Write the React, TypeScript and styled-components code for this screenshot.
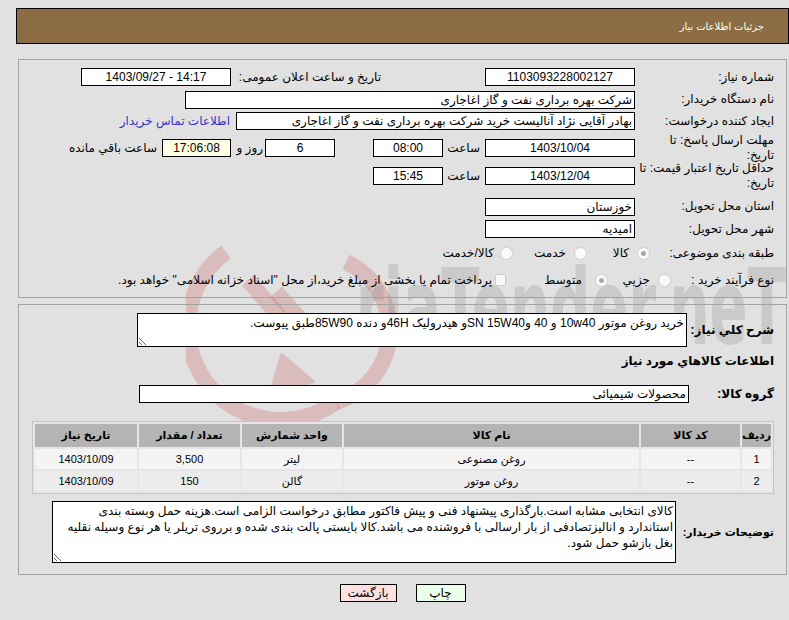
import React from 'react';
import styled, { createGlobalStyle } from 'styled-components';

const Global = createGlobalStyle`
  html, body { margin: 0; padding: 0; background: #e1e1e1; }
  body {
    font-family: "Liberation Sans", "DejaVu Sans", sans-serif;
    font-size: 12px;
    color: #000;
  }
  * { box-sizing: border-box; }
`;

const Page = styled.div`
  position: relative;
  direction: rtl;
  width: 773px;
  margin-left: 16px;
  padding-top: 8px;
`;

const Watermark = styled.svg`
  position: absolute;
  left: 170px;
  top: 232px;
  width: 603px;
  height: 200px;
  z-index: 0;
  pointer-events: none;
`;

const Header = styled.div`
  position: relative;
  z-index: 1;
  height: 36px;
  background: #8c6d43;
  border: 1px solid #000;
  color: #fff;
  display: flex;
  align-items: center;
  padding-right: 24px;
  font-size: 10px;
`;

const Panel = styled.div<{ $mt: number; $pt: number; $pb: number }>`
  position: relative;
  z-index: 1;
  margin: ${(p) => p.$mt}px 2px 0;
  border: 1px solid #a3a3a3;
  padding: ${(p) => p.$pt}px 12px ${(p) => p.$pb}px 0;
`;

const Row = styled.div<{ $h: number; $mt?: number }>`
  display: flex;
  align-items: center;
  height: ${(p) => p.$h}px;
  margin-top: ${(p) => p.$mt ?? 0}px;
`;

const Label = styled.div<{ $w?: number; $bold?: boolean; $fs?: number }>`
  width: ${(p) => p.$w ?? 139}px;
  flex: none;
  text-align: right;
  line-height: 15px;
  font-size: ${(p) => p.$fs ?? 12}px;
  font-weight: ${(p) => (p.$bold ? 'bold' : 'normal')};
  white-space: nowrap;
`;

const Field = styled.div<{ $w: number; $align?: string; $bg?: string; $ltr?: boolean }>`
  width: ${(p) => p.$w}px;
  height: 18px;
  flex: none;
  border: 1px solid #000;
  background: ${(p) => p.$bg ?? '#fff'};
  text-align: ${(p) => p.$align ?? 'center'};
  direction: ${(p) => (p.$ltr ? 'ltr' : 'rtl')};
  padding: 0 2px;
  line-height: 16px;
  white-space: nowrap;
  overflow: hidden;
  font-size: 12px;
`;

const Cell = styled.div<{ $w: number; $pr?: number }>`
  width: ${(p) => p.$w}px;
  flex: none;
  padding-right: ${(p) => p.$pr ?? 0}px;
  white-space: nowrap;
`;

const Link = styled.a`
  margin-right: 6px;
  color: #3434c8;
  text-decoration: none;
  white-space: nowrap;
`;

const Option = styled.div<{ $w?: number; $gap: number }>`
  display: flex;
  align-items: center;
  gap: ${(p) => p.$gap}px;
  width: ${(p) => (p.$w ? `${p.$w}px` : 'auto')};
  flex: none;
  white-space: nowrap;
`;

const Radio = styled.span<{ $on?: boolean }>`
  width: 13px;
  height: 13px;
  flex: none;
  border-radius: 50%;
  border: 1px solid #cdcdcd;
  background: #fafafa;
  display: flex;
  align-items: center;
  justify-content: center;
  &::after {
    content: '';
    width: 5px;
    height: 5px;
    border-radius: 50%;
    background: ${(p) => (p.$on ? '#a8a8a8' : 'transparent')};
  }
`;

const Check = styled.span`
  width: 11px;
  height: 12px;
  flex: none;
  border: 1px solid #cdcdcd;
  background: #f7f7f7;
  border-radius: 2px;
`;

const Area = styled.textarea<{ $w: number; $h: number }>`
  width: ${(p) => p.$w}px;
  height: ${(p) => p.$h}px;
  flex: none;
  border: 1px solid #000;
  background: #fff;
  font-family: "Liberation Sans", "DejaVu Sans", sans-serif;
  font-size: 12px;
  line-height: 16px;
  padding: 1px 2px;
  margin: 0;
  overflow: hidden;
  direction: rtl;
  color: #000;
`;

const Grid = styled.div`
  margin: 18px 0 0 13px;
  display: grid;
  grid-template-columns: 29px 99px 295px 100px 101px 102px;
  grid-template-rows: 23px;
  grid-auto-rows: 20px;
  gap: 2px;
  padding: 2px;
  border: 1px solid #c4c4c4;
  background: #e6e6e6;
`;

const Th = styled.div`
  background: #b4b4b4;
  font-weight: bold;
  display: flex;
  align-items: center;
  justify-content: center;
  font-size: 11px;
`;

const Td = styled.div<{ $alt?: boolean }>`
  background: ${(p) => (p.$alt ? '#ececec' : '#f4f4f4')};
  display: flex;
  align-items: center;
  justify-content: center;
  font-size: 11px;
`;

const Buttons = styled.div`
  position: relative;
  z-index: 1;
  display: flex;
  justify-content: center;
  gap: 19px;
  margin-top: 9px;
`;

const Button = styled.button<{ $bg: string; $w: number }>`
  width: ${(p) => p.$w}px;
  height: 18px;
  border: 1px solid #000;
  background: ${(p) => p.$bg};
  font-family: "Liberation Sans", "DejaVu Sans", sans-serif;
  font-size: 12px;
  padding: 0;
  color: #000;
`;

const items = [
  { n: '1', code: '--', name: 'روغن مصنوعی', unit: 'لیتر', qty: '3,500', date: '1403/10/09' },
  { n: '2', code: '--', name: 'روغن موتور', unit: 'گالن', qty: '150', date: '1403/10/09' },
];

export default function App() {
  return (
    <>
      <Global />
      <Page>
        <Watermark viewBox="0 0 603 200">
          <g fill="none" stroke="rgba(200,60,60,0.22)" strokeWidth="16" strokeLinecap="butt">
            <path d="M40 20 A75 75 0 0 0 150 170" />
            <path d="M150 170 A75 75 0 0 0 160 30" />
            <path d="M62 48 L98 90" />
            <path d="M90 60 L130 105" />
          </g>
          <path d="M95 120 L80 170 L130 150 Z" fill="rgba(200,60,60,0.22)" />
          <text
            x="170"
            y="112"
            fontFamily="DejaVu Sans"
            fontWeight="bold"
            fontSize="105"
            fill="rgba(90,90,90,0.17)"
            textLength="430"
            lengthAdjust="spacingAndGlyphs"
            direction="ltr"
          >
            riaTender.neT
          </text>
        </Watermark>

        <Header>جزئیات اطلاعات نیاز</Header>

        <Panel $mt={15} $pt={6} $pb={3}>
          <Row $h={22}>
            <Label>شماره نیاز:</Label>
            <Field $w={150}>1103093228002127</Field>
            <Cell $w={104} />
            <Label $w={144}>تاریخ و ساعت اعلان عمومی:</Label>
            <Cell $w={6} />
            <Field $w={150} $ltr>1403/09/27 - 14:17</Field>
          </Row>
          <Row $h={23}>
            <Label>نام دستگاه خریدار:</Label>
            <Field $w={450} $align="right">شرکت بهره برداری نفت و گاز اغاجاری</Field>
          </Row>
          <Row $h={20}>
            <Label>ایجاد کننده درخواست:</Label>
            <Field $w={399} $align="right">بهادر  آقایی نژاد آنالیست خرید شرکت بهره برداری نفت و گاز اغاجاری</Field>
            <Link href="#">اطلاعات تماس خریدار</Link>
          </Row>
          <Row $h={34}>
            <Label>مهلت ارسال پاسخ: تا<br />تاریخ:</Label>
            <Field $w={150}>1403/10/04</Field>
            <Cell $w={42} $pr={5}>ساعت</Cell>
            <Field $w={70}>08:00</Field>
            <Cell $w={38} />
            <Field $w={70}>6</Field>
            <Cell $w={34} $pr={2}>روز و</Cell>
            <Field $w={69} $bg="#ffffe6">17:06:08</Field>
            <Cell $w={95} $pr={5}>ساعت باقي مانده</Cell>
          </Row>
          <Row $h={22}>
            <Label>حداقل تاریخ اعتبار قیمت: تا<br />تاریخ:</Label>
            <Field $w={150}>1403/12/04</Field>
            <Cell $w={42} $pr={5}>ساعت</Cell>
            <Field $w={70}>15:45</Field>
          </Row>
          <Row $h={23} $mt={8}>
            <Label>استان محل تحویل:</Label>
            <Field $w={150} $align="right">خوزستان</Field>
          </Row>
          <Row $h={22}>
            <Label>شهر محل تحویل:</Label>
            <Field $w={150} $align="right">امیدیه</Field>
          </Row>
          <Row $h={26}>
            <Label $w={124}>طبقه بندی موضوعی:</Label>
            <Option $w={63} $gap={8}><Radio $on />کالا</Option>
            <Option $w={74} $gap={8}><Radio />خدمت</Option>
            <Option $gap={6}><Radio />کالا/خدمت</Option>
          </Row>
          <Row $h={28}>
            <Label $w={103}>نوع فرآیند خرید :</Label>
            <Option $w={63} $gap={8}><Radio />جزيي</Option>
            <Option $w={102} $gap={13}><Radio $on />متوسط</Option>
            <Option $gap={3}><Check />پرداخت تمام یا بخشی از مبلغ خرید،از محل "اسناد خزانه اسلامی" خواهد بود.</Option>
          </Row>
        </Panel>

        <Panel $mt={6} $pt={8} $pb={11}>
          <Row $h={34}>
            <Label $w={87} $bold>شرح کلي نياز:</Label>
            <Area $w={550} $h={34} readOnly value="خرید روغن موتور 10w40 و 40 وSN 15W40و هیدرولیک 46Hو دنده 85W90طبق پیوست." />
          </Row>
          <Row $h={20} $mt={4}>
            <Label $w={300} $bold>اطلاعات کالاهاي مورد نياز</Label>
          </Row>
          <Row $h={18} $mt={14}>
            <Label $w={85} $bold>گروه کالا:</Label>
            <Field $w={550} $align="right">محصولات شیمیائی</Field>
          </Row>
          <Grid>
            <Th>رديف</Th>
            <Th>کد کالا</Th>
            <Th>نام کالا</Th>
            <Th>واحد شمارش</Th>
            <Th>تعداد / مقدار</Th>
            <Th>تاريخ نياز</Th>
            {items.map((it, i) => (
              <React.Fragment key={it.n}>
                <Td $alt={i === 1}>{it.n}</Td>
                <Td $alt={i === 1}>{it.code}</Td>
                <Td $alt={i === 1}>{it.name}</Td>
                <Td $alt={i === 1}>{it.unit}</Td>
                <Td $alt={i === 1}>{it.qty}</Td>
                <Td $alt={i === 1}>{it.date}</Td>
              </React.Fragment>
            ))}
          </Grid>
          <Row $h={62} $mt={7}>
            <Label $w={98} $bold $fs={11}>توضیحات خریدار:</Label>
            <Area
              $w={624}
              $h={62}
              readOnly
              value="کالای انتخابی مشابه است.بارگذاری پیشنهاد فنی و پیش فاکتور مطابق درخواست الزامی است.هزینه حمل وبسته بندی استاندارد و انالیزتصادفی از بار ارسالی با فروشنده می باشد.کالا بایستی پالت بندی شده و برروی تریلر یا هر نوع وسیله نقلیه بغل بازشو حمل شود."
            />
          </Row>
        </Panel>

        <Buttons>
          <Button $bg="#eaffea" $w={50}>چاپ</Button>
          <Button $bg="#ffe0e0" $w={57}>بازگشت</Button>
        </Buttons>
      </Page>
    </>
  );
}
